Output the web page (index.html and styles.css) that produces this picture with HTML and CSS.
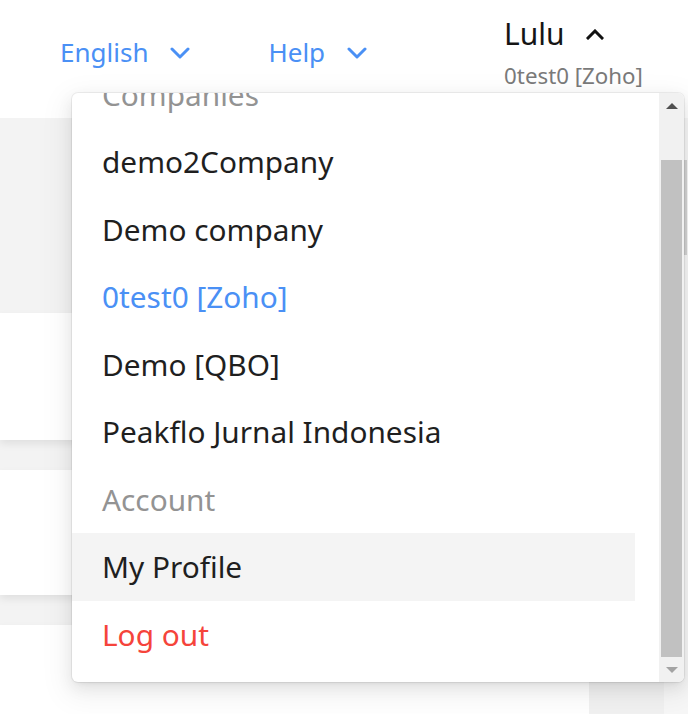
FILE: index.html
```html
<!DOCTYPE html>
<html lang="en">
<head>
<meta charset="utf-8">
<title>Company menu</title>
<link rel="stylesheet" href="styles.css">
</head>
<body>
<div class="page">
  <header class="topbar">
    <div class="nav-item lang">
      <span>English</span>
      <svg class="chev" width="20" height="12" viewBox="0 0 20 12"><path d="M2 2 L10 10 L18 2" fill="none" stroke="currentColor" stroke-width="3" stroke-linecap="round" stroke-linejoin="round"/></svg>
    </div>
    <div class="nav-item help">
      <span>Help</span>
      <svg class="chev" width="20" height="12" viewBox="0 0 20 12"><path d="M2 2 L10 10 L18 2" fill="none" stroke="currentColor" stroke-width="3" stroke-linecap="round" stroke-linejoin="round"/></svg>
    </div>
    <div class="user">
      <div class="user-name">
        <span>Lulu</span>
        <svg class="chev-up" width="18" height="11" viewBox="0 0 18 11"><path d="M2 9 L9 2 L16 9" fill="none" stroke="currentColor" stroke-width="3" stroke-linecap="square" stroke-linejoin="miter"/></svg>
      </div>
      <div class="user-company">0test0 [Zoho]</div>
    </div>
  </header>

  <main class="layout">
    <div class="content">
      <div class="card card-a"></div>
      <div class="card card-b"></div>
      <div class="card card-c"></div>
    </div>
    <div class="side"></div>
    <div class="page-scroll"><div class="page-thumb"></div></div>
  </main>

  <div class="dropdown">
    <div class="menu-viewport">
      <ul class="menu-list">
        <li class="menu-label">Companies</li>
        <li class="menu-item">demo2Company</li>
        <li class="menu-item">Demo company</li>
        <li class="menu-item active">0test0 [Zoho]</li>
        <li class="menu-item">Demo [QBO]</li>
        <li class="menu-item">Peakflo Jurnal Indonesia</li>
        <li class="menu-label">Account</li>
        <li class="menu-item hover">My Profile</li>
        <li class="menu-item danger">Log out</li>
      </ul>
    </div>
    <div class="scrollbar">
      <div class="sb-btn"><span class="arrow-up"></span></div>
      <div class="sb-track"><div class="sb-thumb"></div></div>
      <div class="sb-btn"><span class="arrow-down"></span></div>
    </div>
  </div>
</div>
</body>
</html>
```

FILE: styles.css
```css
* { box-sizing: border-box; }
html, body { margin: 0; padding: 0; }
body {
  width: 688px;
  height: 714px;
  overflow: hidden;
  background: #fff;
  font-family: "Noto Sans", "Open Sans", sans-serif;
  color: #1f1f1f;
}
.page {
  position: relative;
  width: 688px;
  height: 714px;
  display: flex;
  flex-direction: column;
}

/* ---------- top bar ---------- */
.topbar {
  height: 118px;
  flex: none;
  display: flex;
  align-items: flex-start;
  padding-left: 60px;
  background: #fff;
}
.nav-item {
  display: flex;
  align-items: center;
  gap: 22px;
  color: #4a90f5;
  font-size: 26px;
  line-height: 40px;
  margin-top: 32px;
}
.lang { margin-right: 78px; }
.help { margin-right: 137px; }
.chev { display: block; margin-top: 2px; }

.user {
  display: flex;
  flex-direction: column;
}
.user-name {
  display: flex;
  align-items: center;
  gap: 21px;
  font-size: 30px;
  line-height: 40px;
  margin-top: 14px;
  color: #151515;
}
.chev-up { display: block; color: #111; }
.user-company {
  font-size: 22.3px;
  line-height: 30px;
  color: #7a7a7a;
  margin-top: 7px;
}

/* ---------- background layout ---------- */
.layout {
  flex: 1;
  display: flex;
  background: #f3f3f3;
  min-height: 0;
}
.content {
  width: 589px;
  padding-top: 195px;
  display: flex;
  flex-direction: column;
  gap: 30px;
}
.card {
  background: #fff;
  box-shadow: 0 4px 8px rgba(0, 0, 0, 0.08);
}
.card-a { height: 127px; }
.card-b { height: 125px; }
.card-c { flex: 1; }
.side { width: 75px; background: #f1f1f1; }
.page-scroll {
  width: 24px;
  background: #f7f7f7;
  padding-top: 42px;
  padding-left: 3px;
}
.page-thumb {
  width: 20px;
  height: 95px;
  background: #d3d3d3;
}

/* ---------- dropdown ---------- */
.dropdown {
  position: absolute;
  left: 72px;
  top: 93px;
  width: 612px;
  height: 589px;
  background: #fff;
  border-radius: 6px;
  overflow: hidden;
  display: flex;
  box-shadow: 0 0 0 1px rgba(0, 0, 0, 0.06), 0 3px 6px -4px rgba(0, 0, 0, 0.12), 0 6px 16px 0 rgba(0, 0, 0, 0.08), 0 9px 28px 8px rgba(0, 0, 0, 0.05);
}
.menu-viewport {
  flex: 1;
  overflow: hidden;
}
.menu-list {
  list-style: none;
  margin: -46.5px 0 0 0;
  padding: 14px 24px 14px 0;
}
.menu-list li {
  height: 67.5px;
  display: flex;
  align-items: center;
  padding-left: 30px;
  font-size: 29.8px;
  white-space: nowrap;
}
.menu-label { color: #939393; }
.menu-item { color: #1f1f1f; }
.menu-item.active { color: #4a90f5; }
.menu-item.hover { background: #f4f4f4; }
.menu-item.danger { color: #f5443b; }

.scrollbar {
  width: 25px;
  flex: none;
  background: #f1f1f1;
  display: flex;
  flex-direction: column;
}
.sb-btn {
  height: 25px;
  flex: none;
  display: flex;
  align-items: center;
  justify-content: center;
}
.arrow-up {
  width: 0; height: 0;
  border-left: 6px solid transparent;
  border-right: 6px solid transparent;
  border-bottom: 6px solid #505050;
}
.arrow-down {
  width: 0; height: 0;
  border-left: 6px solid transparent;
  border-right: 6px solid transparent;
  border-top: 6px solid #a3a3a3;
}
.sb-track {
  flex: 1;
  display: flex;
  flex-direction: column;
  justify-content: flex-end;
  padding: 0 2px;
}
.sb-thumb {
  height: 497px;
  background: #c1c1c1;
}
```
